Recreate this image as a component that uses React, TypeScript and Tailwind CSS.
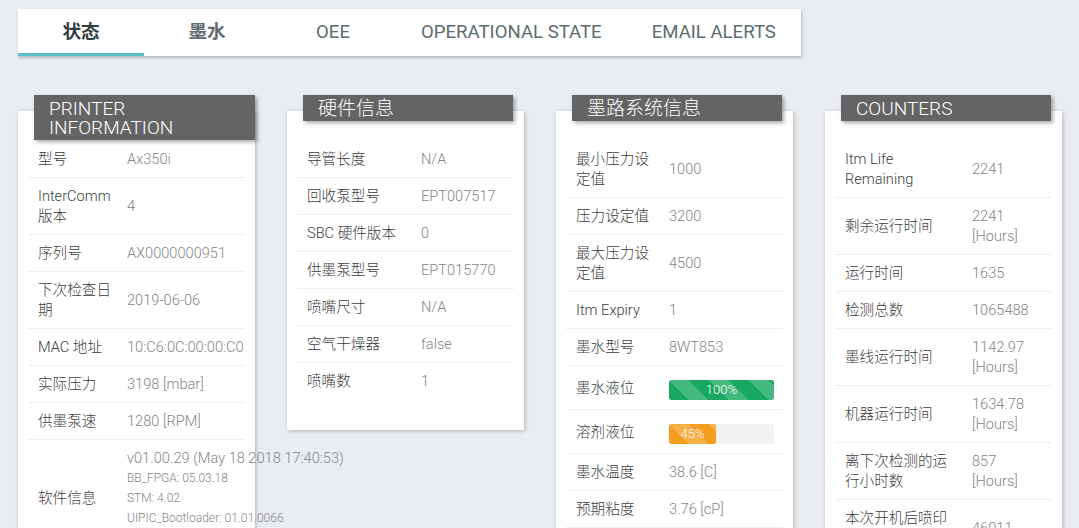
import React from 'react';

type Row = { label: string; value: React.ReactNode };

const stripes =
  'bg-[linear-gradient(45deg,rgba(255,255,255,.18)_25%,transparent_25%,transparent_50%,rgba(255,255,255,.18)_50%,rgba(255,255,255,.18)_75%,transparent_75%,transparent)] bg-[length:40px_40px]';

function Bar({ pct, color }: { pct: number; color: string }) {
  return (
    <div className="h-[27px] flex items-end pb-[1px]">
      <div className="w-[105px] h-[20px] bg-[#f2f2f2] rounded-[2px] overflow-hidden">
        <div
          className={`h-full ${color} ${stripes} text-white text-[13px] leading-[20px] text-center rounded-[2px]`}
          style={{ width: `${pct}%` }}
        >
          {pct}%
        </div>
      </div>
    </div>
  );
}

function Card({
  title,
  rows,
  labelW,
  labelPr,
  headerPos,
}: {
  title: string;
  rows: Row[];
  labelW: string;
  labelPr: string;
  headerPos: string;
}) {
  return (
    <div className="relative w-[237px] shrink-0 self-start bg-white shadow-[1px_1px_4px_rgba(0,0,0,0.25)] pt-[30px] pb-[31px] px-[10px]">
      <div
        className={`absolute top-[-16px] left-[16px] ${headerPos} bg-[#646464] text-white text-[19px] leading-[19px] pt-[4px] pb-[3px] pl-[15px] shadow-[2px_2px_4px_rgba(0,0,0,0.35)]`}
      >
        {title}
      </div>
      <div className="divide-y divide-[#eeeeee]">
        {rows.map((r, i) => (
          <div key={i} className="flex items-center py-2 text-[14.6px] leading-[20px]">
            <div className={`${labelW} ${labelPr} shrink-0 pl-[10px] text-[#3c3c3c]`}>{r.label}</div>
            <div className="flex-1 pr-[10px] text-[#858585]">{r.value}</div>
          </div>
        ))}
      </div>
    </div>
  );
}

const software = (
  <div className="whitespace-nowrap">
    <div>v01.00.29 (May 18 2018 17:40:53)</div>
    <div className="text-[12px]">BB_FPGA: 05.03.18</div>
    <div className="text-[12px]">STM: 4.02</div>
    <div className="text-[12px]">UIPIC_Bootloader: 01.01.0066</div>
    <div className="text-[12px]">UIPIC_App: 01.01.0066</div>
  </div>
);

const printerRows: Row[] = [
  { label: '型号', value: 'Ax350i' },
  { label: 'InterComm 版本', value: '4' },
  { label: '序列号', value: 'AX0000000951' },
  { label: '下次检查日期', value: '2019-06-06' },
  { label: 'MAC 地址', value: '10:C6:0C:00:00:C0' },
  { label: '实际压力', value: '3198 [mbar]' },
  { label: '供墨泵速', value: '1280 [RPM]' },
  { label: '软件信息', value: software },
];

const hardwareRows: Row[] = [
  { label: '导管长度', value: 'N/A' },
  { label: '回收泵型号', value: 'EPT007517' },
  { label: 'SBC 硬件版本', value: '0' },
  { label: '供墨泵型号', value: 'EPT015770' },
  { label: '喷嘴尺寸', value: 'N/A' },
  { label: '空气干燥器', value: 'false' },
  { label: '喷嘴数', value: '1' },
];

const inkRows: Row[] = [
  { label: '最小压力设定值', value: '1000' },
  { label: '压力设定值', value: '3200' },
  { label: '最大压力设定值', value: '4500' },
  { label: 'Itm Expiry', value: '1' },
  { label: '墨水型号', value: '8WT853' },
  { label: '墨水液位', value: <Bar pct={100} color="bg-[#19a862]" /> },
  { label: '溶剂液位', value: <Bar pct={45} color="bg-[#f59d1f]" /> },
  { label: '墨水温度', value: '38.6 [C]' },
  { label: '预期粘度', value: '3.76 [cP]' },
  { label: '实际粘度', value: '3.80 [cP]' },
];

const counterRows: Row[] = [
  { label: 'Itm Life Remaining', value: '2241' },
  { label: '剩余运行时间', value: '2241 [Hours]' },
  { label: '运行时间', value: '1635' },
  { label: '检测总数', value: '1065488' },
  { label: '墨线运行时间', value: '1142.97 [Hours]' },
  { label: '机器运行时间', value: '1634.78 [Hours]' },
  { label: '离下次检测的运行小时数', value: '857 [Hours]' },
  { label: '本次开机后喷印次数', value: '46011' },
];

const tabs = ['状态', '墨水', 'OEE', 'OPERATIONAL STATE', 'EMAIL ALERTS'];

export default function App() {
  return (
    <div
      className="min-h-screen bg-[#e9edf1] px-[18px] pt-[9px] font-light overflow-hidden"
      style={{ fontFamily: "Roboto, 'Noto Sans CJK SC', sans-serif" }}
    >
      <div className="inline-flex bg-white shadow-[1px_2px_3px_rgba(0,0,0,0.22)]">
        {tabs.map((t, i) => (
          <div
            key={t}
            className={`min-w-[126px] px-[25px] h-[47px] pt-[3px] flex items-center justify-center text-[18.6px] border-b-[3px] ${
              i === 0
                ? 'border-[#5bc0c6] font-bold text-[#333d3f]'
                : i === 1
                  ? 'border-transparent font-bold text-[#5d6c6e]'
                  : 'border-transparent font-normal text-[#5d6c6e]'
            }`}
          >
            {t}
          </div>
        ))}
      </div>

      <div className="flex gap-[32px] mt-[55px]">
        <Card title="PRINTER INFORMATION" rows={printerRows} labelW="w-[99px]" labelPr="pr-[14px]" headerPos="right-0 pr-[50px]" />
        <Card title="硬件信息" rows={hardwareRows} labelW="w-[124px]" labelPr="pr-[14px]" headerPos="right-[11px]" />
        <Card title="墨路系统信息" rows={inkRows} labelW="w-[103px]" labelPr="pr-[16px]" headerPos="right-[11px]" />
        <Card title="COUNTERS" rows={counterRows} labelW="w-[137px]" labelPr="pr-[20px]" headerPos="right-[11px]" />
      </div>
    </div>
  );
}
